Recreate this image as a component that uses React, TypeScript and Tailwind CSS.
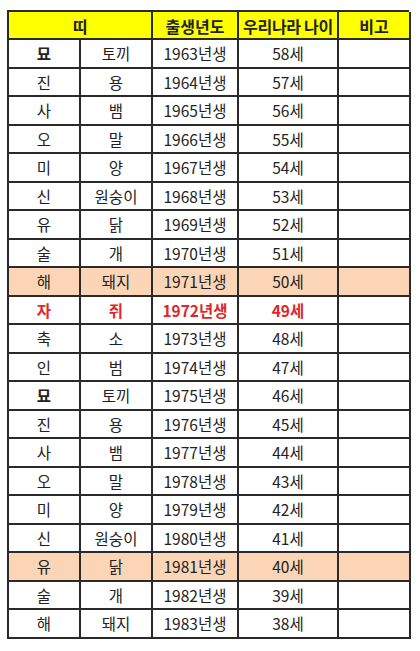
import React from 'react';

type Row = { tti: string; animal: string; year: number; age: number; tone?: 'orange' | 'red' };

const rows: Row[] = [
  { tti: '묘', animal: '토끼', year: 1963, age: 58 },
  { tti: '진', animal: '용', year: 1964, age: 57 },
  { tti: '사', animal: '뱀', year: 1965, age: 56 },
  { tti: '오', animal: '말', year: 1966, age: 55 },
  { tti: '미', animal: '양', year: 1967, age: 54 },
  { tti: '신', animal: '원숭이', year: 1968, age: 53 },
  { tti: '유', animal: '닭', year: 1969, age: 52 },
  { tti: '술', animal: '개', year: 1970, age: 51 },
  { tti: '해', animal: '돼지', year: 1971, age: 50, tone: 'orange' },
  { tti: '자', animal: '쥐', year: 1972, age: 49, tone: 'red' },
  { tti: '축', animal: '소', year: 1973, age: 48 },
  { tti: '인', animal: '범', year: 1974, age: 47 },
  { tti: '묘', animal: '토끼', year: 1975, age: 46 },
  { tti: '진', animal: '용', year: 1976, age: 45 },
  { tti: '사', animal: '뱀', year: 1977, age: 44 },
  { tti: '오', animal: '말', year: 1978, age: 43 },
  { tti: '미', animal: '양', year: 1979, age: 42 },
  { tti: '신', animal: '원숭이', year: 1980, age: 41 },
  { tti: '유', animal: '닭', year: 1981, age: 40, tone: 'orange' },
  { tti: '술', animal: '개', year: 1982, age: 39 },
  { tti: '해', animal: '돼지', year: 1983, age: 38 },
];

const cell = 'flex items-center justify-center border-r-2 border-b-2 border-[#2a2a2a] pt-[1px]';

export default function App() {
  return (
    <div className="min-h-[651px] w-[420px] bg-white pl-[7px] pt-[10px] font-['Noto_Sans_CJK_KR',sans-serif] text-[15.5px] leading-none text-[#222]">
      <div className="grid h-[629px] w-[402px] grid-cols-[72px_72px_86px_100px_72px] grid-rows-[28px_repeat(21,1fr)] border-l-2 border-t-2 border-[#2a2a2a]">
        {/* Header */}
        <div className={`${cell} col-span-2 bg-[#ffff00] text-[16px] font-bold`}>띠</div>
        <div className={`${cell} bg-[#ffff00] text-[16px] font-bold`}>출생년도</div>
        <div className={`${cell} bg-[#ffff00] text-[16px] font-bold tracking-[-0.3px]`}>우리나라 나이</div>
        <div className={`${cell} bg-[#ffff00] text-[16px] font-bold`}>비고</div>

        {rows.map((r) => {
          const bg = r.tone === 'orange' ? 'bg-[#fbd5b5]' : 'bg-white';
          const txt = r.tone === 'red' ? 'font-bold text-[#e0262b]' : '';
          return (
            <React.Fragment key={r.year}>
              <div className={`${cell} ${bg} ${txt} ${r.tti === '묘' ? 'font-semibold' : ''}`}>{r.tti}</div>
              <div className={`${cell} ${bg} ${txt}`}>{r.animal}</div>
              <div className={`${cell} ${bg} ${txt}`}>{r.year}년생</div>
              <div className={`${cell} ${bg} ${txt}`}>{r.age}세</div>
              <div className={`${cell} ${bg}`} />
            </React.Fragment>
          );
        })}
      </div>
    </div>
  );
}
